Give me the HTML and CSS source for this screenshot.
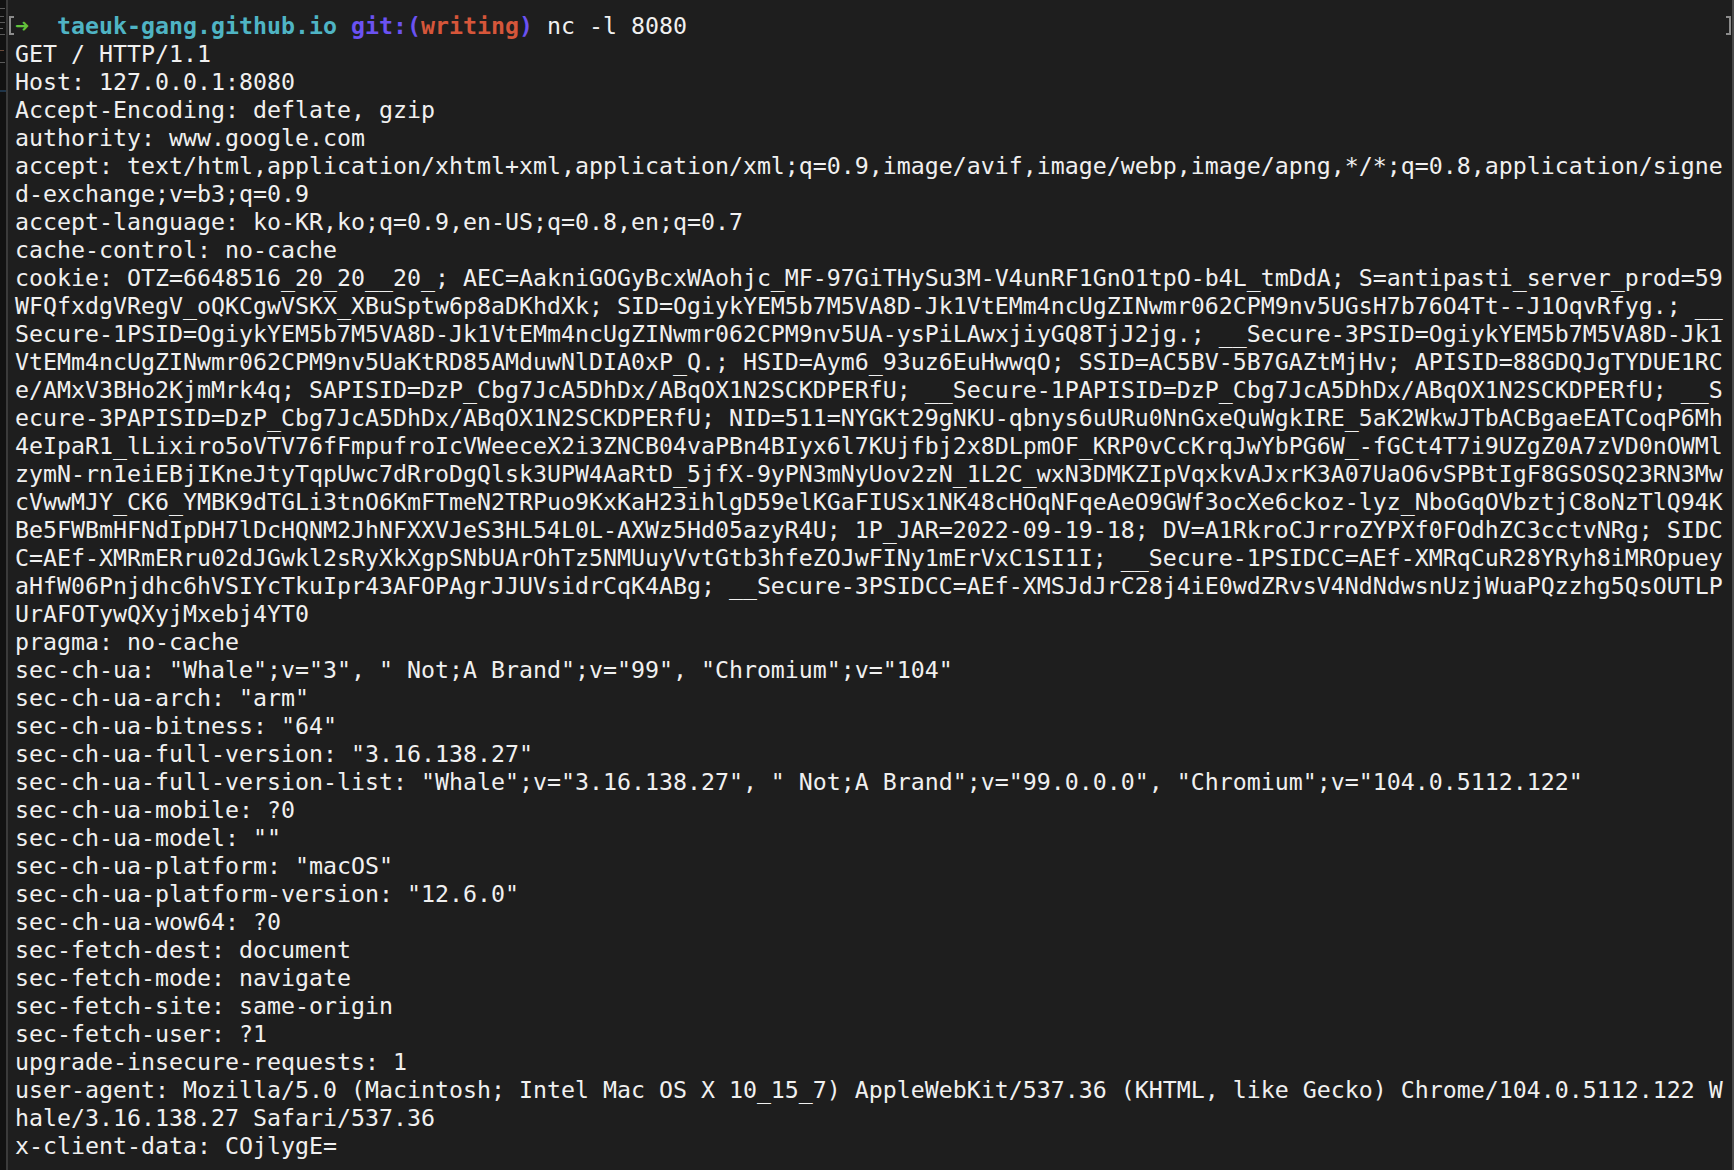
FILE: index.html
```html
<!DOCTYPE html>
<html lang="en">
<head>
<meta charset="utf-8">
<title>Terminal</title>
<link rel="stylesheet" href="styles.css">
</head>
<body>
<div class="window">
  <div class="side-strip">
    <span class="ghost g1"></span>
    <span class="ghost g2"></span>
    <span class="ghost g3"></span>
    <span class="ghost g4"></span>
    <span class="ghost g5"></span>
    <span class="ghost g6"></span>
    <span class="ghost g7"></span>
    <span class="ghost g8"></span>
  </div>
  <div class="term">
    <div class="line prompt"><span class="mark mark-left"></span><span class="arrow">➜</span>  <span class="dir">taeuk-gang.github.io</span> <span class="git">git:(</span><span class="branch">writing</span><span class="git">)</span> nc -l 8080<span class="mark mark-right"></span></div>
    <div class="line">GET / HTTP/1.1</div>
    <div class="line">Host: 127.0.0.1:8080</div>
    <div class="line">Accept-Encoding: deflate, gzip</div>
    <div class="line">authority: www.google.com</div>
    <div class="line">accept: text/html,application/xhtml+xml,application/xml;q=0.9,image/avif,image/webp,image/apng,*/*;q=0.8,application/signe</div>
    <div class="line">d-exchange;v=b3;q=0.9</div>
    <div class="line">accept-language: ko-KR,ko;q=0.9,en-US;q=0.8,en;q=0.7</div>
    <div class="line">cache-control: no-cache</div>
    <div class="line">cookie: OTZ=6648516_20_20__20_; AEC=AakniGOGyBcxWAohjc_MF-97GiTHySu3M-V4unRF1GnO1tpO-b4L_tmDdA; S=antipasti_server_prod=59</div>
    <div class="line">WFQfxdgVRegV_oQKCgwVSKX_XBuSptw6p8aDKhdXk; SID=OgiykYEM5b7M5VA8D-Jk1VtEMm4ncUgZINwmr062CPM9nv5UGsH7b76O4Tt--J1OqvRfyg.; __</div>
    <div class="line">Secure-1PSID=OgiykYEM5b7M5VA8D-Jk1VtEMm4ncUgZINwmr062CPM9nv5UA-ysPiLAwxjiyGQ8TjJ2jg.; __Secure-3PSID=OgiykYEM5b7M5VA8D-Jk1</div>
    <div class="line">VtEMm4ncUgZINwmr062CPM9nv5UaKtRD85AMduwNlDIA0xP_Q.; HSID=Aym6_93uz6EuHwwqO; SSID=AC5BV-5B7GAZtMjHv; APISID=88GDQJgTYDUE1RC</div>
    <div class="line">e/AMxV3BHo2KjmMrk4q; SAPISID=DzP_Cbg7JcA5DhDx/ABqOX1N2SCKDPERfU; __Secure-1PAPISID=DzP_Cbg7JcA5DhDx/ABqOX1N2SCKDPERfU; __S</div>
    <div class="line">ecure-3PAPISID=DzP_Cbg7JcA5DhDx/ABqOX1N2SCKDPERfU; NID=511=NYGKt29gNKU-qbnys6uURu0NnGxeQuWgkIRE_5aK2WkwJTbACBgaeEATCoqP6Mh</div>
    <div class="line">4eIpaR1_lLixiro5oVTV76fFmpufroIcVWeeceX2i3ZNCB04vaPBn4BIyx6l7KUjfbj2x8DLpmOF_KRP0vCcKrqJwYbPG6W_-fGCt4T7i9UZgZ0A7zVD0nOWMl</div>
    <div class="line">zymN-rn1eiEBjIKneJtyTqpUwc7dRroDgQlsk3UPW4AaRtD_5jfX-9yPN3mNyUov2zN_1L2C_wxN3DMKZIpVqxkvAJxrK3A07UaO6vSPBtIgF8GSOSQ23RN3Mw</div>
    <div class="line">cVwwMJY_CK6_YMBK9dTGLi3tnO6KmFTmeN2TRPuo9KxKaH23ihlgD59elKGaFIUSx1NK48cHOqNFqeAeO9GWf3ocXe6ckoz-lyz_NboGqOVbztjC8oNzTlQ94K</div>
    <div class="line">Be5FWBmHFNdIpDH7lDcHQNM2JhNFXXVJeS3HL54L0L-AXWz5Hd05azyR4U; 1P_JAR=2022-09-19-18; DV=A1RkroCJrroZYPXf0FOdhZC3cctvNRg; SIDC</div>
    <div class="line">C=AEf-XMRmERru02dJGwkl2sRyXkXgpSNbUArOhTz5NMUuyVvtGtb3hfeZOJwFINy1mErVxC1SI1I; __Secure-1PSIDCC=AEf-XMRqCuR28YRyh8iMROpuey</div>
    <div class="line">aHfW06Pnjdhc6hVSIYcTkuIpr43AFOPAgrJJUVsidrCqK4ABg; __Secure-3PSIDCC=AEf-XMSJdJrC28j4iE0wdZRvsV4NdNdwsnUzjWuaPQzzhg5QsOUTLP</div>
    <div class="line">UrAFOTywQXyjMxebj4YT0</div>
    <div class="line">pragma: no-cache</div>
    <div class="line">sec-ch-ua: "Whale";v="3", " Not;A Brand";v="99", "Chromium";v="104"</div>
    <div class="line">sec-ch-ua-arch: "arm"</div>
    <div class="line">sec-ch-ua-bitness: "64"</div>
    <div class="line">sec-ch-ua-full-version: "3.16.138.27"</div>
    <div class="line">sec-ch-ua-full-version-list: "Whale";v="3.16.138.27", " Not;A Brand";v="99.0.0.0", "Chromium";v="104.0.5112.122"</div>
    <div class="line">sec-ch-ua-mobile: ?0</div>
    <div class="line">sec-ch-ua-model: ""</div>
    <div class="line">sec-ch-ua-platform: "macOS"</div>
    <div class="line">sec-ch-ua-platform-version: "12.6.0"</div>
    <div class="line">sec-ch-ua-wow64: ?0</div>
    <div class="line">sec-fetch-dest: document</div>
    <div class="line">sec-fetch-mode: navigate</div>
    <div class="line">sec-fetch-site: same-origin</div>
    <div class="line">sec-fetch-user: ?1</div>
    <div class="line">upgrade-insecure-requests: 1</div>
    <div class="line">user-agent: Mozilla/5.0 (Macintosh; Intel Mac OS X 10_15_7) AppleWebKit/537.36 (KHTML, like Gecko) Chrome/104.0.5112.122 W</div>
    <div class="line">hale/3.16.138.27 Safari/537.36</div>
    <div class="line">x-client-data: COjlygE=</div>
  </div>
  <div class="edge-right"></div>
</div>
</body>
</html>
```

FILE: styles.css
```css
html, body {
  margin: 0;
  padding: 0;
  background: #1e1e1e;
}

.window {
  display: flex;
  width: 1734px;
  height: 1170px;
  overflow: hidden;
  background: #1e1e1e;
}

.side-strip {
  position: relative;
  flex: 0 0 6px;
  background: #121212;
  border-right: 2px solid #3b3b3b;
}

.ghost {
  position: absolute;
  left: 0;
  height: 1px;
  background: #5a5a5a;
}
.g1 { top: 8px; width: 5px; }
.g2 { top: 16px; width: 4px; }
.g3 { top: 22px; width: 5px; }
.g4 { top: 28px; width: 3px; background: #6a6a6a; }
.g5 { top: 34px; width: 5px; }
.g6 { top: 50px; width: 4px; background: #6a4a3a; }
.g7 { top: 62px; width: 5px; }
.g8 { top: 90px; width: 6px; height: 2px; background: #1f3448; }

.term {
  flex: 1 1 auto;
  padding: 12px 0 0 7px;
  font-family: "DejaVu Sans Mono", "Liberation Mono", monospace;
  font-size: 23.25px;
  line-height: 28px;
  color: #f0f0f0;
}

.line {
  position: relative;
  height: 28px;
  white-space: pre;
}

.prompt .arrow {
  color: #63c23b;
  font-weight: bold;
}
.prompt .dir {
  color: #4fb4c4;
  font-weight: bold;
}
.prompt .git {
  color: #6b52f2;
  font-weight: bold;
}
.prompt .branch {
  color: #d6563a;
  font-weight: bold;
}

.mark {
  position: absolute;
  top: 4px;
  width: 3px;
  height: 15px;
  border: 2px solid #8c8c8c;
}
.mark-left {
  left: -6px;
  border-right: none;
}
.mark-right {
  left: 1711px;
  border-left: none;
}

.edge-right {
  flex: 0 0 2px;
  background: #4a4a4a;
}
```
